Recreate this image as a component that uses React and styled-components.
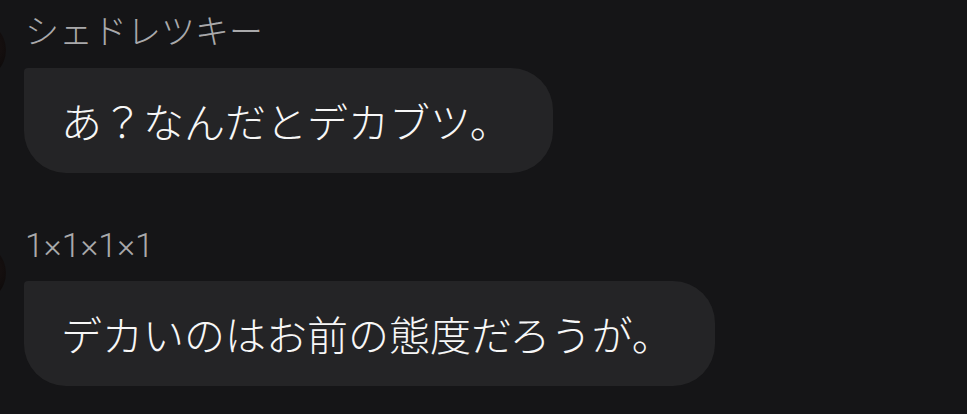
import React from "react";
import styled, { createGlobalStyle } from "styled-components";

const GlobalStyle = createGlobalStyle`
	html, body {
		margin: 0;
		padding: 0;
		background: #151517;
	}
	body {
		width: 967px;
		height: 414px;
		overflow: hidden;
		font-family: "Noto Sans CJK JP", "Noto Sans", sans-serif;
	}
`;

const Thread = styled.div`
	display: flex;
	flex-direction: column;
	gap: 52px;
	padding-top: 12px;
`;

const Group = styled.div`
	display: flex;
	align-items: flex-start;
	gap: 18px;
`;

const Avatar = styled.div`
	flex: none;
	width: 60px;
	height: 60px;
	margin-left: -54px;
	margin-top: ${(p) => p.$top}px;
	border-radius: 50%;
	background: radial-gradient(circle at 70% 45%, #1c1414 0%, #0a0808 60%, #050505 100%);
`;

const Body = styled.div`
	display: flex;
	flex-direction: column;
	align-items: flex-start;
	gap: 16px;
`;

const Name = styled.div`
	height: 40px;
	line-height: 40px;
	padding-left: 1px;
	font-family: Roboto, "Noto Sans CJK JP", sans-serif;
	font-size: 34px;
	font-weight: 300;
	color: #a9a9ab;
	white-space: nowrap;
`;

const Bubble = styled.div`
	background: #242426;
	color: #f7f7f7;
	font-size: 41px;
	font-weight: 300;
	line-height: 57px;
	padding: 24px 42px 24px 37px;
	border-radius: 4px 42px 42px 42px;
	white-space: nowrap;
`;

const messages = [
	{ name: "シェドレツキー", text: "あ？なんだとデカブツ。", avatarTop: 8 },
	{ name: "1×1×1×1", text: "デカいのはお前の態度だろうが。", avatarTop: 18 },
];

export default function App() {
	return (
		<>
			<GlobalStyle />
			<Thread>
				{messages.map((m) => (
					<Group key={m.name}>
						<Avatar $top={m.avatarTop} />
						<Body>
							<Name>{m.name}</Name>
							<Bubble>{m.text}</Bubble>
						</Body>
					</Group>
				))}
			</Thread>
		</>
	);
}
